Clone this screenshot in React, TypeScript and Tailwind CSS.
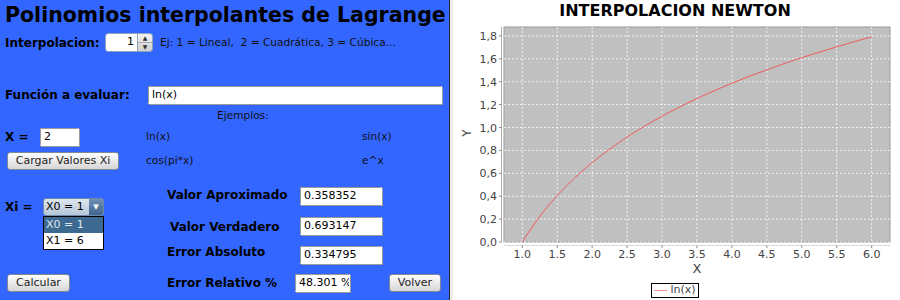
import React from "react";

const font = { fontFamily: '"DejaVu Sans", Verdana, sans-serif' };

function Field({ value, w, right }: { value: string; w: string; right?: boolean }) {
  return (
    <div
      className={`${w} h-[18px] bg-white border border-[#9a9a9a] border-b-white border-r-white shadow-[1px_1px_0_#9a9a9a] flex items-center px-[3px] text-[11px] font-normal text-black whitespace-nowrap overflow-hidden ${right ? "justify-end" : ""}`}
    >
      {value}
    </div>
  );
}

function Btn({ label, w }: { label: string; w: string }) {
  return (
    <div
      className={`${w} h-[18px] rounded-[3px] border border-[#7d8a96] bg-gradient-to-b from-white to-[#d6d6d6] flex items-center justify-center text-[11px] font-normal text-[#222] whitespace-nowrap`}
    >
      {label}
    </div>
  );
}

function Chart() {
  // plot area in svg coords
  const L = 54, R = 440, T = 5, B = 220;
  const x0 = 72.3, kx = 69.87; // pixels per unit of x
  const ky = 114.5; // pixels per unit of y
  const px = (x: number) => x0 + (x - 1) * kx;
  const py = (y: number) => B - y * ky;
  const pts: string[] = [];
  for (let i = 0; i <= 100; i++) {
    const x = 1 + (5 * i) / 100;
    pts.push(`${px(x).toFixed(2)},${py(Math.log(x)).toFixed(2)}`);
  }
  const xt = [1, 1.5, 2, 2.5, 3, 3.5, 4, 4.5, 5, 5.5, 6];
  const yt = [0, 0.2, 0.4, 0.6, 0.8, 1.0, 1.2, 1.4, 1.6, 1.8];
  return (
    <svg width="450" height="258" className="block" style={font}>
      <rect x={L} y={T} width={R - L} height={B - T} fill="#c0c0c0" stroke="#9a9a9a" strokeWidth="1" />
      {xt.map((t) => (
        <line key={"vx" + t} x1={px(t)} x2={px(t)} y1={T} y2={B} stroke="#ffffff" strokeWidth="1" strokeDasharray="2 2" opacity="0.8" />
      ))}
      {yt.map((t) => (
        <line key={"hy" + t} x1={L} x2={R} y1={py(t)} y2={py(t)} stroke="#ffffff" strokeWidth="1" strokeDasharray="2 2" opacity="0.8" />
      ))}
      <polyline points={pts.join(" ")} fill="none" stroke="#f05a5a" strokeWidth="1" />
      {/* axis lines */}
      <line x1={51.5} x2={51.5} y1={T} y2={B} stroke="#b0b0b0" />
      <line x1={L} x2={R} y1={223.5} y2={223.5} stroke="#d8d8d8" />
      {yt.map((t) => (
        <g key={"yl" + t}>
          <line x1={49} x2={51.5} y1={py(t)} y2={py(t)} stroke="#888" />
          <text x={47} y={py(t) + 4} textAnchor="end" fontSize="11" fill="#444">
            {t.toFixed(1).replace(".", ",")}
          </text>
        </g>
      ))}
      {xt.map((t) => (
        <g key={"xl" + t}>
          <line x1={px(t)} x2={px(t)} y1={223.5} y2={226} stroke="#888" />
          <text x={px(t)} y={236} textAnchor="middle" fontSize="11" fill="#444">
            {t.toFixed(1)}
          </text>
        </g>
      ))}
      <text x={17} y={111} fontSize="12" fill="#444" textAnchor="middle" transform="rotate(-90 17 111)" dy="4">
        Y
      </text>
      <text x={247} y={251} fontSize="13" fill="#444" textAnchor="middle">
        X
      </text>
    </svg>
  );
}

export default function App() {
  return (
    <div className="w-[900px] h-[300px] flex overflow-hidden" style={font}>
      {/* left panel */}
      <div className="w-[449px] h-full bg-[#3366ff] text-black flex flex-col pl-[5px] shrink-0">
        <div className="h-[30px] pt-[3px] text-[20.5px] font-bold leading-[24px] whitespace-nowrap">
          Polinomios interpolantes de Lagrange
        </div>

        <div className="mt-[3px] h-[19px] flex items-center">
          <span className="w-[100px] text-[12px] font-bold">Interpolacion:</span>
          <div className="flex h-[19px] w-[48px] rounded-[3px] overflow-hidden border border-[#8ea5bd]">
            <div className="flex-1 bg-white flex items-center justify-end pr-[3px] text-[11px]">1</div>
            <div className="w-[15px] flex flex-col border-l border-[#8ea5bd] bg-gradient-to-b from-[#f4f4f4] to-[#cfcfcf]">
              <div className="flex-1 flex items-center justify-center text-[6px] leading-none text-[#333]">▲</div>
              <div className="flex-1 flex items-center justify-center text-[6px] leading-none text-[#333] border-t border-[#aab]">▼</div>
            </div>
          </div>
          <span className="ml-[7px] text-[10.6px] text-[#111] whitespace-nowrap">
            Ej: 1 = Lineal,&nbsp; 2 = Cuadrática, 3 = Cúbica...
          </span>
        </div>

        <div className="mt-[34px] h-[18px] flex items-center">
          <span className="w-[143px] text-[12px] font-bold">Función a evaluar:</span>
          <Field value="ln(x)" w="w-[294px]" />
        </div>

        <div className="mt-[5px] h-[14px] flex items-center pl-[212px] text-[10.6px] text-[#111]">
          Ejemplos:
        </div>

        <div className="mt-[5px] h-[18px] flex items-center text-[10.6px] text-[#111]">
          <span className="w-[35px] text-[12px] font-bold text-black">X =</span>
          <Field value="2" w="w-[39px]" />
          <span className="ml-[67px] w-[216px]">ln(x)</span>
          <span>sin(x)</span>
        </div>

        <div className="mt-[6px] h-[18px] flex items-center text-[10.6px] text-[#111]">
          <div className="ml-[2px]">
            <Btn label="Cargar Valores Xi" w="w-[112px]" />
          </div>
          <span className="ml-[27px] w-[216px]">cos(pi*x)</span>
          <span>e^x</span>
        </div>

        {/* results section */}
        <div className="mt-[17px] flex">
          <div className="w-[162px] flex flex-col">
            <div className="mt-[11px] h-[18px] flex items-center">
              <span className="w-[38px] text-[12px] font-bold">Xi =</span>
              <div className="relative">
                <div className="w-[61px] h-[18px] rounded-[3px] border border-[#6f8aa6] bg-gradient-to-b from-[#dde6ef] to-[#b7c7d8] flex items-center overflow-hidden">
                  <span className="flex-1 pl-[2px] text-[11px]">X0 = 1</span>
                  <span className="w-[14px] h-full bg-gradient-to-b from-[#6d8fb3] to-[#3f6790] flex items-center justify-center text-[7px] text-white">▼</span>
                </div>
                <div className="absolute left-0 top-[18px] w-[61px] border border-black bg-white text-[11px] z-10">
                  <div className="h-[16px] bg-[#3c6a91] text-[#dfe6ee] pl-[2px] flex items-center">X0 = 1</div>
                  <div className="h-[16px] pl-[2px] flex items-center">X1 = 6</div>
                </div>
              </div>
            </div>
            <div className="mt-[58px] ml-[2px]">
              <Btn label="Calcular" w="w-[63px]" />
            </div>
          </div>

          <div className="flex flex-col text-[12px] font-bold">
            <div className="h-[18px] flex items-center">
              <span className="w-[133px] -mt-[3px]">Valor Aproximado</span>
              <Field value="0.358352" w="w-[82px]" />
            </div>
            <div className="mt-[12px] h-[18px] flex items-center">
              <span className="w-[133px] pl-[3px] mt-[1px]">Valor Verdadero</span>
              <Field value="0.693147" w="w-[82px]" />
            </div>
            <div className="mt-[11px] h-[18px] flex items-center">
              <span className="w-[133px] -mt-[6px]">Error Absoluto</span>
              <Field value="0.334795" w="w-[82px]" />
            </div>
            <div className="mt-[10px] h-[18px] flex items-center">
              <span className="w-[128px]">Error Relativo %</span>
              <Field value="48.301 %" w="w-[55px]" />
              <div className="ml-[39px]">
                <Btn label="Volver" w="w-[52px]" />
              </div>
            </div>
          </div>
        </div>
      </div>

      <div className="w-px h-full bg-[#2a2a2a] shrink-0" />

      {/* right panel */}
      <div className="w-[450px] h-full bg-white flex flex-col border-l-[3px] border-[#ececec] shrink-0">
        <div className="h-[22px] flex items-center justify-center text-[16px] font-bold text-black -ml-[3px]">
          INTERPOLACION NEWTON
        </div>
        <div className="-ml-[3px]">
          <Chart />
        </div>
        <div className="flex justify-center -ml-[3px] mt-[3px]">
          <div className="h-[15px] px-[2px] border border-black flex items-center gap-[3px] text-[11px] text-[#444]">
            <span className="w-[13px] h-px bg-[#ff9090]" />
            <span>ln(x)</span>
          </div>
        </div>
      </div>
    </div>
  );
}
